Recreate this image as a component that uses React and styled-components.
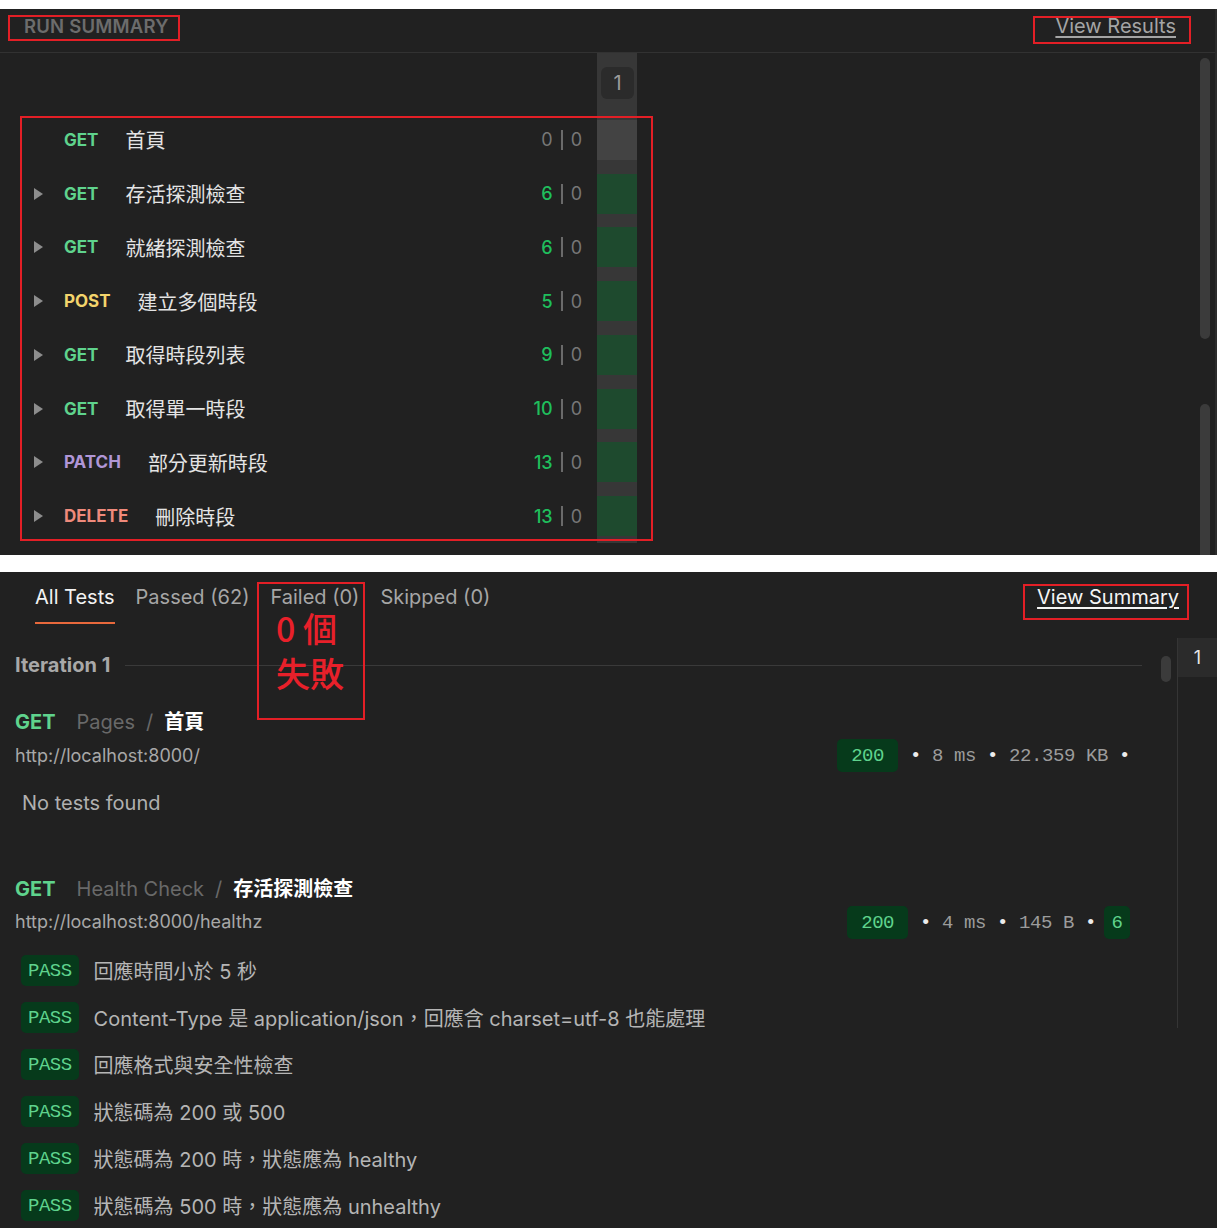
import React from 'react';
import styled, { createGlobalStyle } from 'styled-components';

const Global = createGlobalStyle`
  html, body { margin: 0; padding: 0; background: #ffffff; }
  body {
    font-family: Inter, "Noto Sans CJK TC", sans-serif;
    -webkit-font-smoothing: antialiased;
  }
  * { box-sizing: border-box; }
`;

const CJK = `Inter, "Noto Sans CJK TC", sans-serif`;
const MONO = `"Liberation Mono", "DejaVu Sans Mono", monospace`;

const Page = styled.div`
  width: 1217px;
  padding-top: 9px;
  display: flex;
  flex-direction: column;
  gap: 17px;
`;

const Panel = styled.section`
  position: relative;
  background: #212121;
  height: ${p => p.$h}px;
  overflow: hidden;
  border-right: ${p => (p.$edge ? '2px solid #2c2c2c' : 'none')};
`;

const Annot = styled.div`
  position: absolute;
  left: ${p => p.$x}px;
  top: ${p => p.$y}px;
  width: ${p => p.$w}px;
  height: ${p => p.$h}px;
  border: 2px solid #e31f26;
  pointer-events: none;
`;

const AnnotNote = styled.div`
  padding: 27px 0 0 17px;
  display: flex;
  flex-direction: column;
  gap: 11px;
  font-family: "Noto Sans CJK TC", sans-serif;
  font-size: 34px;
  line-height: 34px;
  font-weight: 500;
  color: #e8202a;
  white-space: pre;
`;

/* ---------- top: run summary ---------- */
const SummaryHeader = styled.header`
  height: 44px;
  border-bottom: 1px solid #323232;
  display: flex;
  align-items: center;
  justify-content: space-between;
  padding: 0 39px 9px 24px;
`;

const SummaryTitle = styled.div`
  font-size: 18.5px;
  font-weight: 600;
  color: #6c6c6c;
  letter-spacing: 0.2px;
`;

const ResultsLink = styled.a`
  font-size: 20px;
  color: #a5a5a5;
  text-decoration: underline;
  text-decoration-thickness: 2px;
  text-underline-offset: 3px;
`;

const RunTable = styled.div`
  display: flex;
  flex-direction: column;
  width: 637px;
`;

const RunRow = styled.div`
  display: flex;
  height: ${p => p.$h}px;
`;

const RunInfo = styled.div`
  width: 597px;
  display: flex;
  align-items: center;
  padding: 0 15px 0 34px;
`;

const Lane = styled.div`
  width: 40px;
  background: #373737;
  display: flex;
  align-items: ${p => (p.$top ? 'flex-start' : 'center')};
  padding: ${p => (p.$top ? '14px 3px 0 4px' : '0')};
`;

const LaneBar = styled.div`
  width: 100%;
  height: 40px;
  background: ${p => p.$color};
`;

const IterBadge = styled.div`
  width: 33px;
  height: 32px;
  border-radius: 6px;
  background: #2b2b2b;
  color: #9b9b9b;
  font-size: 20px;
  display: flex;
  align-items: center;
  justify-content: center;
`;

const Caret = styled.span`
  width: 0;
  height: 0;
  border-left: 9px solid #8d8d8d;
  border-top: 6.5px solid transparent;
  border-bottom: 6.5px solid transparent;
  margin-right: 21px;
  visibility: ${p => (p.$hide ? 'hidden' : 'visible')};
`;

const Method = styled.span`
  font-size: 17px;
  font-weight: 700;
  color: ${p => p.$color};
  margin-right: 27px;
`;

const RunName = styled.span`
  font-family: "Noto Sans CJK TC", sans-serif;
  font-size: 20px;
  color: #e4e4e4;
`;

const Counts = styled.div`
  margin-left: auto;
  display: flex;
  align-items: center;
  gap: 8px;
  font-size: 18px;
`;

const PassCount = styled.span`
  color: ${p => (p.$zero ? '#777' : '#1fbe5c')};
  font-weight: ${p => (p.$zero ? 400 : 500)};
`;

const Divider = styled.span`
  width: 2px;
  height: 20px;
  background: #6a6a6a;
`;

const FailCount = styled.span`
  color: #777;
`;

const ScrollThumb = styled.div`
  position: absolute;
  right: ${p => p.$r}px;
  top: ${p => p.$t}px;
  width: 10px;
  height: ${p => p.$h}px;
  border-radius: 5px;
  background: #3b3b3b;
`;

/* ---------- bottom: results ---------- */
const TabsBar = styled.div`
  height: 52px;
  display: flex;
  justify-content: space-between;
  align-items: flex-start;
  padding: 0 38px 0 35px;
`;

const Tabs = styled.div`
  display: flex;
  gap: 21px;
`;

const Tab = styled.div`
  height: 52px;
  padding-top: 15px;
  line-height: 20px;
  font-size: 20px;
  color: ${p => (p.$active ? '#f2f2f2' : '#a6a6a6')};
  border-bottom: 2px solid ${p => (p.$active ? '#e8693c' : 'transparent')};
`;

const SummaryLink = styled.a`
  margin-top: 13px;
  line-height: 24px;
  font-size: 20px;
  color: #f5f5f5;
  text-decoration: underline;
  text-decoration-thickness: 2px;
  text-underline-offset: 3px;
`;

const ResultsArea = styled.div`
  display: flex;
`;

const ResultsMain = styled.div`
  flex: 1;
  padding: 0 35px 0 15px;
`;

const Sidebar = styled.div`
  width: 40px;
  height: 390px;
  margin-top: 14px;
  border-left: 1px solid #353535;
`;

const SideIter = styled.div`
  height: 39px;
  background: #2b2b2b;
  color: #e6e6e6;
  font-size: 18px;
  display: flex;
  align-items: center;
  justify-content: center;
`;

const IterationHeading = styled.div`
  margin-top: 29px;
  height: 24px;
  display: flex;
  align-items: center;
  gap: 15px;
`;

const IterLabel = styled.div`
  font-size: 20px;
  font-weight: 700;
  color: #a8a8a8;
`;

const Rule = styled.div`
  flex: 1;
  height: 1px;
  background: #3a3a3a;
`;

const Request = styled.div`
  margin-top: ${p => p.$gap}px;
`;

const ReqTitle = styled.div`
  display: flex;
  align-items: baseline;
  line-height: 26px;
  font-size: 20px;
  font-family: ${CJK};
`;

const ReqMethod = styled.span`
  font-weight: 700;
  color: #5fd38d;
  margin-right: 21px;
`;

const Folder = styled.span`
  color: #696969;
`;

const Slash = styled.span`
  color: #696969;
  margin: 0 11px;
`;

const ReqName = styled.span`
  font-weight: 700;
  color: #ffffff;
`;

const UrlRow = styled.div`
  margin-top: 4px;
  height: 33px;
  display: flex;
  align-items: center;
  justify-content: space-between;
`;

const Url = styled.div`
  font-size: 18px;
  color: #a8a8a8;
  margin-top: ${p => (p.$up ? -3 : 0)}px;
`;

const Metrics = styled.div`
  display: flex;
  align-items: center;
  margin-right: 12px;
  font-family: ${MONO};
  font-size: 19px;
  letter-spacing: -0.4px;
  color: #9c9c9c;
`;

const StatusBadge = styled.span`
  height: ${p => p.$h}px;
  padding: 0 ${p => p.$pad}px;
  margin-left: ${p => p.$ml || 0}px;
  border-radius: 5px;
  background: #063a1b;
  color: #5fd38d;
  font-family: ${MONO};
  font-size: 19px;
  letter-spacing: -0.5px;
  display: inline-flex;
  align-items: center;
`;

const MetricText = styled.span`
  margin-left: 12px;
  white-space: pre;
`;

const Dot = styled.span`
  color: #ececec;
`;

const NoTests = styled.div`
  margin-top: 18px;
  padding-left: 7px;
  line-height: 26px;
  font-size: 20px;
  color: #b0b0b0;
`;

const PassList = styled.div`
  margin-top: 16px;
  padding-left: 6px;
  display: flex;
  flex-direction: column;
  gap: 16px;
`;

const PassRow = styled.div`
  display: flex;
  align-items: center;
  gap: 15px;
`;

const PassText = styled.span`
  font-family: ${CJK};
  font-size: 20px;
  color: #b5b5b5;
`;

const runs = [
  { m: 'GET', name: '首頁', pass: 0, first: true },
  { m: 'GET', name: '存活探測檢查', pass: 6 },
  { m: 'GET', name: '就緒探測檢查', pass: 6 },
  { m: 'POST', name: '建立多個時段', pass: 5 },
  { m: 'GET', name: '取得時段列表', pass: 9 },
  { m: 'GET', name: '取得單一時段', pass: 10 },
  { m: 'PATCH', name: '部分更新時段', pass: 13 },
  { m: 'DELETE', name: '刪除時段', pass: 13 },
];

const methodColor = {
  GET: '#5fd38d',
  POST: '#f3d46c',
  PATCH: '#b096d6',
  DELETE: '#ef8a7b',
};

const passes = [
  '回應時間小於 5 秒',
  'Content-Type 是 application/json，回應含 charset=utf-8 也能處理',
  '回應格式與安全性檢查',
  '狀態碼為 200 或 500',
  '狀態碼為 200 時，狀態應為 healthy',
  '狀態碼為 500 時，狀態應為 unhealthy',
];

function Metric({ parts }) {
  return (
    <MetricText>
      {parts.map((p, i) =>
        p === '•' ? <Dot key={i}>•</Dot> : <React.Fragment key={i}>{p}</React.Fragment>
      )}
    </MetricText>
  );
}

export default function App() {
  return (
    <>
      <Global />
      <Page>
        <Panel $h={546} $edge>
          <SummaryHeader>
            <SummaryTitle>RUN SUMMARY</SummaryTitle>
            <ResultsLink>View Results</ResultsLink>
          </SummaryHeader>
          <RunTable>
            <RunRow $h={60}>
              <RunInfo />
              <Lane $top>
                <IterBadge>1</IterBadge>
              </Lane>
            </RunRow>
            {runs.map((r, i) => (
              <RunRow $h={53.75} key={i}>
                <RunInfo>
                  <Caret $hide={r.first} />
                  <Method $color={methodColor[r.m]}>{r.m}</Method>
                  <RunName>{r.name}</RunName>
                  <Counts>
                    <PassCount $zero={r.pass === 0}>{r.pass}</PassCount>
                    <Divider />
                    <FailCount>0</FailCount>
                  </Counts>
                </RunInfo>
                <Lane>
                  <LaneBar $color={r.pass === 0 ? '#434343' : '#1e4a2e'} />
                </Lane>
              </RunRow>
            ))}
          </RunTable>
          <ScrollThumb $r={5} $t={49} $h={281} />
          <ScrollThumb $r={5} $t={395} $h={170} />
          <Annot $x={8} $y={6} $w={172} $h={26} />
          <Annot $x={1033} $y={7} $w={158} $h={28} />
          <Annot $x={20} $y={107} $w={633} $h={425} />
        </Panel>

        <Panel $h={656}>
          <TabsBar>
            <Tabs>
              <Tab $active>All Tests</Tab>
              <Tab>Passed (62)</Tab>
              <Tab>Failed (0)</Tab>
              <Tab>Skipped (0)</Tab>
            </Tabs>
            <SummaryLink>View Summary</SummaryLink>
          </TabsBar>
          <ResultsArea>
            <ResultsMain>
              <IterationHeading>
                <IterLabel>Iteration 1</IterLabel>
                <Rule />
              </IterationHeading>

              <Request $gap={32}>
                <ReqTitle>
                  <ReqMethod>GET</ReqMethod>
                  <Folder>Pages</Folder>
                  <Slash>/</Slash>
                  <ReqName>首頁</ReqName>
                </ReqTitle>
                <UrlRow>
                  <Url>http://localhost:8000/</Url>
                  <Metrics>
                    <StatusBadge $h={33} $pad={14}>200</StatusBadge>
                    <Metric parts={['•', ' 8 ms ', '•', ' 22.359 KB ', '•']} />
                  </Metrics>
                </UrlRow>
                <NoTests>No tests found</NoTests>
              </Request>

              <Request $gap={60}>
                <ReqTitle>
                  <ReqMethod>GET</ReqMethod>
                  <Folder>Health Check</Folder>
                  <Slash>/</Slash>
                  <ReqName>存活探測檢查</ReqName>
                </ReqTitle>
                <UrlRow>
                  <Url $up>http://localhost:8000/healthz</Url>
                  <Metrics>
                    <StatusBadge $h={33} $pad={14}>200</StatusBadge>
                    <Metric parts={['•', ' 4 ms ', '•', ' 145 B ', '•']} />
                    <StatusBadge $h={33} $pad={7.5} $ml={8}>6</StatusBadge>
                  </Metrics>
                </UrlRow>
                <PassList>
                  {passes.map((t, i) => (
                    <PassRow key={i}>
                      <StatusBadge $h={31} $pad={7}>PASS</StatusBadge>
                      <PassText>{t}</PassText>
                    </PassRow>
                  ))}
                </PassList>
              </Request>
            </ResultsMain>
            <Sidebar>
              <SideIter>1</SideIter>
            </Sidebar>
          </ResultsArea>
          <ScrollThumb $r={46} $t={84} $h={26} />
          <Annot $x={257} $y={10} $w={108} $h={138}>
            <AnnotNote>
              <span>0 個</span>
              <span>失敗</span>
            </AnnotNote>
          </Annot>
          <Annot $x={1023} $y={12} $w={166} $h={36} />
        </Panel>
      </Page>
    </>
  );
}
